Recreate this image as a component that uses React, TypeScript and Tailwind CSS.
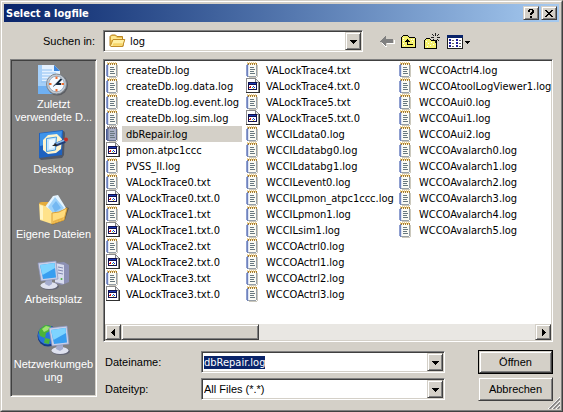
import { useEffect, useRef, type ReactNode } from 'react';

type FileKind = 'log' | 'app';

const COLUMNS: string[][] = [
  [
    'createDb.log', 'createDb.log.data.log', 'createDb.log.event.log', 'createDb.log.sim.log',
    'dbRepair.log', 'pmon.atpc1ccc', 'PVSS_II.log', 'VALockTrace0.txt', 'VALockTrace0.txt.0',
    'VALockTrace1.txt', 'VALockTrace1.txt.0', 'VALockTrace2.txt', 'VALockTrace2.txt.0',
    'VALockTrace3.txt', 'VALockTrace3.txt.0',
  ],
  [
    'VALockTrace4.txt', 'VALockTrace4.txt.0', 'VALockTrace5.txt', 'VALockTrace5.txt.0',
    'WCCILdata0.log', 'WCCILdatabg0.log', 'WCCILdatabg1.log', 'WCCILevent0.log',
    'WCCILpmon_atpc1ccc.log', 'WCCILpmon1.log', 'WCCILsim1.log', 'WCCOActrl0.log',
    'WCCOActrl1.log', 'WCCOActrl2.log', 'WCCOActrl3.log',
  ],
  [
    'WCCOActrl4.log', 'WCCOAtoolLogViewer1.log', 'WCCOAui0.log', 'WCCOAui1.log', 'WCCOAui2.log',
    'WCCOAvalarch0.log', 'WCCOAvalarch1.log', 'WCCOAvalarch2.log', 'WCCOAvalarch3.log',
    'WCCOAvalarch4.log', 'WCCOAvalarch5.log',
  ],
];

const SELECTED = 'dbRepair.log';

const RAISED =
  'bg-[#d4d0c8] border border-t-[#d4d0c8] border-l-[#d4d0c8] border-r-[#404040] border-b-[#404040] shadow-[inset_1px_1px_0_#fff,inset_-1px_-1px_0_#808080]';
// The padding keeps children off the inner line of the bevel
const SUNKEN =
  'p-px border border-t-[#808080] border-l-[#808080] border-r-white border-b-white shadow-[inset_1px_1px_0_#404040,inset_-1px_-1px_0_#d4d0c8]';

const fileKind = (name: string): FileKind => (/\.(log|txt)$/.test(name) ? 'log' : 'app');

function NotepadIcon({ selected }: { selected?: boolean }) {
  return (
    <svg className="shrink-0" width="16" height="16" viewBox="0 0 16 16" shapeRendering="crispEdges" aria-hidden="true">
      <path d="M12 3h1v12h-1zM4 15h8v1H4z" fill="#cbc8bc" />
      <path d="M3 2h9v12h-1v1H3z" fill={selected ? '#a9b0c6' : '#fbfbf4'} />
      <path d="M1 3h1v11H1z" fill={selected ? '#4c5c94' : '#8f9fd0'} />
      <path d="M2 2h1v13H2z" fill={selected ? '#6472a0' : '#7083bd'} />
      <path d="M3 3h1v11H3z" fill={selected ? '#8792b4' : '#dce4f6'} />
      <path d="M11 3h1v11h-1zM3 14h8v1H3z" fill={selected ? '#66708e' : '#98a0a8'} />
      <path d="M3 1h1v2H3zM5 1h1v2H5zM7 1h1v2H7zM9 1h1v2H9zM11 1h1v2h-1z" fill={selected ? '#776c6c' : '#a87c2c'} />
      <path d="M2 0h1v2H2zM4 0h1v2H4zM6 0h1v2H6zM8 0h1v2H8zM10 0h1v2h-1z" fill={selected ? '#9a9490' : '#ecd090'} />
      <path d="M5 5h4v1H5zM5 7h5v1H5zM5 9h4v1H5zM5 11h5v1H5z" fill="#687880" />
    </svg>
  );
}

function AppFileIcon() {
  return (
    <svg className="shrink-0" width="16" height="16" viewBox="0 0 16 16" shapeRendering="crispEdges" aria-hidden="true">
      <path d="M1 0h10v1h1v1h1v1h1v12H1z" fill="#8c8c8c" />
      <path d="M2 1h8v4h3v9H2z" fill="#fff" />
      <path d="M10 1h1v3h2v1h-3z" fill="#808080" />
      <path d="M11 2h1v1h1v1h-2z" fill="#e8e8e8" />
      <path d="M14 4h1v11h-1zM1 14h14v1H1z" fill="#303030" />
      <path d="M3 4h9v8H3z" fill="#10104c" />
      <path d="M4 5h7v1H4z" fill="#1c3cb4" />
      <path d="M4 7h7v4H4z" fill="#fff" />
      <path d="M5 8h1v2H5zM4 9h1v1H4z" fill="#d81c1c" />
      <path d="M8 8h1v1H8zM9 9h1v1H9z" fill="#1830d8" />
      <path d="M7 9h1v1H7z" fill="#20a0a0" />
      <path d="M8 10h1v1H8z" fill="#e0b020" />
    </svg>
  );
}

function FolderIcon() {
  return (
    <svg width="17" height="16" viewBox="0 0 17 16" aria-hidden="true">
      <path d="M1 3.500 2.500 2h4L8 3.500h5.500v3H15l-1 7H2L1 12.500z" fill="#ecc050" stroke="#b98420" />
      <path d="M2 3.500 3 3h3.200L8 5h5v2H2z" fill="#ffe890" />
      <path d="M1.500 12.500 4 6.500H15.800L13.500 13.500H2z" fill="#fff0a4" stroke="#c18d28" />
      <path d="M3.500 12.800h9.500l.8-2.500H4.400z" fill="#f6d468" />
    </svg>
  );
}

function RecentIcon() {
  return (
    <svg width="34" height="32" viewBox="0 0 34 32" aria-hidden="true">
      <path d="M1 1h16l6 6v23H1z" fill="#e4f1ff" />
      <path d="M1 1h4v29H1z" fill="#a6d0fa" />
      <path d="M1 20h22v10H1z" fill="#6fb0f2" />
      <path d="M1 17h12v5H1z" fill="#a4cff8" />
      <path d="M17 1v6h6z" fill="#3c86dc" />
      <path d="M5 6h10M5 9h14M5 12h8M5 15h6M4 18h5" stroke="#8fc0f2" />
      <circle cx="20.500" cy="21" r="10.500" fill="#40444c" opacity=".55" />
      <circle cx="19.500" cy="20" r="10" fill="#c4cad2" stroke="#808890" />
      <circle cx="19.500" cy="20" r="7.800" fill="#f6faff" stroke="#98aec4" />
      <path d="M19.500 12.500v2.500M19.500 25v2.500M12 20h2.500M24.500 20H27" stroke="#f07030" strokeWidth="2" />
      <path d="m24.500 15-5 5h4.500" stroke="#16283c" strokeWidth="1.800" fill="none" />
      <path d="m19.500 20-3.500 2.500" stroke="#50647a" />
    </svg>
  );
}

function DesktopIcon() {
  return (
    <svg width="34" height="32" viewBox="0 0 34 32" aria-hidden="true">
      <path d="M3 5 27 2l1 2-1 22-2 3-21 2-2-2z" fill="#303c54" opacity=".6" />
      <path d="M2 4 26 1l-1 25-23 3z" fill="#1e62c0" />
      <path d="M3 4.500 25 2l-1 10L3 17z" fill="#3e94ea" />
      <path d="m6 11 5-5 9-1 5 5-1 10-5 4-8 1-5-4z" fill="#fff4cc" />
      <path d="m9.500 9.500 10-1.500-1 13-9 1.500z" fill="#c8e8ff" stroke="#489cdf" />
      <path d="m12 11 6-1-1 9-5 1z" fill="#eef9ff" />
      <path d="m18 16 10-4" stroke="#203c78" strokeWidth="4" />
      <path d="m18 15 10-4" stroke="#88bcec" strokeWidth="1.500" />
      <path d="m15 17 4-3 1 3z" fill="#242424" />
      <circle cx="29" cy="10.500" r="2" fill="#c62c24" />
    </svg>
  );
}

function DocumentsIcon() {
  return (
    <svg width="34" height="32" viewBox="0 0 34 32" aria-hidden="true">
      <path d="m3 10 12 21 13-5 4-12-3-1z" fill="#50401c" opacity=".5" />
      <path d="M2 10q0-2 3-2h6l18 6-13 14z" fill="#e4ac3c" />
      <path d="M8 13 16 2l5-1 8 13-11 10-9-3z" fill="#e4f4ff" />
      <path d="m11 13 7-10 9 11-9 8z" fill="#9ed2fa" />
      <path d="m15 12 4-5 5 7-6 4z" fill="#74b8f2" />
      <path d="M2 10q7 1 13 8v12L3 26z" fill="#ffe28a" />
      <path d="m3 11 3 1v14l-3-1z" fill="#fff4c4" />
      <path d="m15 19 7-1 8-4-3 12-12 4z" fill="#ffdc7c" stroke="#dca238" />
      <path d="m16 27 11-4-.8 2.500L16 29z" fill="#eab448" />
    </svg>
  );
}

function Monitor({ x, y }: { x: number; y: number }) {
  return (
    <g transform={`translate(${x} ${y})`}>
      <ellipse cx="12" cy="26.500" rx="9" ry="3.500" fill="#50546c" opacity=".6" />
      <ellipse cx="11" cy="25.500" rx="8.500" ry="3.500" fill="#dfe2f0" />
      <path d="M8 18h6v6l-3 2-4-2z" fill="#a4acce" />
      <path d="M0 3 18 1l2 18-17 2z" fill="#c9cfe8" stroke="#8890b8" strokeWidth=".7" />
      <path d="m2 5 14.500-2L18 17.500 5 19z" fill="#389ef0" />
      <path d="m2 5 14.500-2L17 8 4.500 15z" fill="#7ed4ff" />
    </g>
  );
}

function ComputerIcon() {
  return (
    <svg width="34" height="32" viewBox="0 0 34 32" aria-hidden="true">
      <path d="m18 4 9-1 5 3v17l-7 3-7-2z" fill="#8c90b4" />
      <path d="m18 4 9 2v19l-9-2z" fill="#d8dcee" />
      <path d="m21 8 5 1M21 11l5 1M21 14l5 1" stroke="#8088b0" />
      <circle cx="24.500" cy="20" r="1" fill="#4cb044" />
      <Monitor x={1} y={1} />
    </svg>
  );
}

function NetworkIcon() {
  return (
    <svg width="34" height="32" viewBox="0 0 34 32" aria-hidden="true">
      <circle cx="11" cy="12" r="10.500" fill="#143c84" />
      <circle cx="10.500" cy="11" r="9.500" fill="#2a74da" />
      <path d="m3 5 5-4 6 1-1 5-4 2-1 5-5-2-1-4zM8 14l5 1-1 5-5-1z" fill="#4cb438" />
      <path d="m5 5 4-3 4 1-2 3-4 2z" fill="#a0e470" />
      <Monitor x={12} y={1} />
    </svg>
  );
}

const PLACES: { label: string; icon: ReactNode; space: string }[] = [
  { label: 'Zuletzt verwendete D...', icon: <RecentIcon />, space: 'pt-[3px]' },
  { label: 'Desktop', icon: <DesktopIcon />, space: 'pt-[5px]' },
  { label: 'Eigene Dateien', icon: <DocumentsIcon />, space: 'pt-[18px]' },
  { label: 'Arbeitsplatz', icon: <ComputerIcon />, space: 'pt-[18px]' },
  { label: 'Netzwerkumgebung', icon: <NetworkIcon />, space: 'pt-[18px]' },
];

function Arrow({ dir = 'down' }: { dir?: 'down' | 'left' | 'right' }) {
  const paths = {
    down: 'M0 2h7v1H6v1H5v1H4v1H3V5H2V4H1V3H0z',
    left: 'M5 0v7H4V6H3V5H2V4H1V3h1V2h1V1h1V0z',
    right: 'M2 0v7h1V6h1V5h1V4h1V3H5V2H4V1H3V0z',
  };
  return (
    <svg width="7" height="7" viewBox="0 0 7 7" shapeRendering="crispEdges" aria-hidden="true">
      <path d={paths[dir]} />
    </svg>
  );
}

function DropHandle() {
  return (
    <span className={`pointer-events-none absolute inset-y-px right-px flex w-4 items-center justify-center ${RAISED}`}>
      <Arrow />
    </span>
  );
}

function Toolbar() {
  return (
    <div className="ml-4 flex items-center gap-[6px]">
      <button aria-label="Zurück" className="h-5 w-4">
        <svg width="16" height="20" viewBox="0 0 16 20" shapeRendering="crispEdges">
          <path d="M3 12h1v1h1v1h1v1h2v-3h7V9h1v4H8v3H6v-1H5v-1H4v-1H3z" fill="#fff" />
          <path d="M1 10h1V9h1V8h1V7h1V6h1V5h1v3h7v4H7v3H6v-1H5v-1H4v-1H3v-1H1z" fill="#808080" />
        </svg>
      </button>
      <button aria-label="Übergeordneter Ordner" className="h-5 w-4">
        <svg width="16" height="20" viewBox="0 0 16 20" shapeRendering="crispEdges">
          <path d="M1 5h1V4h5v1h1v1h6v1h1v10H0V6h1z" fill="#000" />
          <path d="M2 5h5v1h1v1h6v9H1V6h1z" fill="#f4f06c" />
          <path d="M2 7h1v1H2zM10 8h1v1h-1zM12 8h1v1h-1zM2 9h1v1H2zM11 10h1v1h-1zM2 12h1v1H2zM8 10h1v1H8zM3 14h1v1H3z" fill="#fff" />
          <path d="M6 8h1v1h1v1h1v1H7v2h5v1H6v-3H4v-1h1V9h1z" fill="#000" />
        </svg>
      </button>
      <button aria-label="Neuer Ordner" className="h-5 w-[18px]">
        <svg width="18" height="20" viewBox="0 0 18 20" shapeRendering="crispEdges">
          <path d="M2 8h1V7h4v1h1v1h6v9H1V9h1z" fill="#000" />
          <path d="M3 8h4v1h1v1h5v7H2V9h1z" fill="#f4f06c" />
          <path d="M3 10h1v1H3zM5 12h1v1H5zM8 11h1v1H8zM10 13h1v1h-1zM4 15h1v1H4zM7 14h1v1H7z" fill="#fff" />
          <path d="M12 2h1v3h-1zM12 9h1v3h-1zM8 6h3v1H8zM14 6h3v1h-3zM9 3h1v1H9zM10 4h1v1h-1zM14 4h1v1h-1zM15 3h1v1h-1zM14 8h1v1h-1zM15 9h1v1h-1zM10 8h1v1h-1z" fill="#202020" />
        </svg>
      </button>
      <button aria-label="Ansicht" className="h-5 w-6">
        <svg width="24" height="20" viewBox="0 0 24 20" shapeRendering="crispEdges">
          <path d="M0 4h16v14H0z" fill="#202020" />
          <path d="M1 7h14v10H1z" fill="#fff" />
          <path d="M0 4h16v3H0z" fill="#0a246a" />
          <path d="M2 8h2v2H2zM9 8h2v2H9zM2 11h2v2H2zM9 11h2v2H9zM2 14h2v2H2zM9 14h2v2H9z" fill="#20209a" />
          <path d="M5 9h2v1H5zM12 9h2v1h-2zM5 12h2v1H5zM12 12h2v1h-2zM5 15h2v1H5zM12 15h2v1h-2z" fill="#606060" />
          <path d="M18 10h5v1h-1v1h-1v1h-1v-1h-1v-1h-1z" fill="#000" />
        </svg>
      </button>
    </div>
  );
}

export default function App() {
  const nameRef = useRef<HTMLInputElement>(null);

  useEffect(() => {
    nameRef.current?.focus();
    nameRef.current?.select();
  }, []);

  return (
    <div className="border border-t-[#d4d0c8] border-r-[#404040] border-b-[#404040] border-l-[#d4d0c8] bg-[#d4d0c8] font-['Liberation_Sans',Arial,sans-serif] text-[11px] leading-[13px] text-black">
      <div className="relative border border-t-white border-r-[#808080] border-b-[#808080] border-l-white p-[2px]">
        <header className="flex h-[18px] items-center gap-[2px] bg-linear-to-r from-[#0a246a] to-[#a6caf0] px-[2px]">
          <h1 className="flex-1 font-['DejaVu_Sans_Condensed','DejaVu_Sans',sans-serif] text-[11px] font-bold text-white">
            Select a logfile
          </h1>
          <button aria-label="Hilfe" className={`flex h-[14px] w-4 items-center justify-center ${RAISED}`}>
            <svg width="8" height="9" viewBox="0 0 8 9" shapeRendering="crispEdges">
              <path d="M2 0h4v1h1v3H6v1H5v1H3V4h1V3h1V1H3v2H1V1h1zM3 7h2v2H3z" />
            </svg>
          </button>
          <button aria-label="Schließen" className={`flex h-[14px] w-4 items-center justify-center ${RAISED}`}>
            <svg width="8" height="7" viewBox="0 0 8 7" shapeRendering="crispEdges">
              <path d="M0 0h2v1h1v1h2V1h1V0h2v1H7v1H6v1H5v1h1v1h1v1h1v1H6V6H5V5H3v1H2v1H0V6h1V5h1V4h1V3H2V2H1V1H0z" />
            </svg>
          </button>
        </header>

        <div className="px-[6px] pt-2 pb-[7px]">
          <div className="flex items-center">
            <label htmlFor="folder" className="w-[93px] pr-2 text-right">Suchen in:</label>
            <div className={`relative flex h-[22px] w-[260px] items-center bg-white ${SUNKEN}`}>
              <span className="pl-1"><FolderIcon /></span>
              <select id="folder" className="h-full min-w-0 flex-1 appearance-none pl-1 font-['DejaVu_Sans_Condensed',sans-serif] outline-none">
                <option>log</option>
              </select>
              <DropHandle />
            </div>
            <Toolbar />
          </div>

          <div className="mt-[7px] flex gap-[6px]">
            <nav className={`mb-1 flex w-[87px] shrink-0 flex-col bg-[#808080] ${SUNKEN}`}>
              {PLACES.map(place => (
                <button key={place.label} className={`flex w-full flex-col items-center text-white ${place.space}`}>
                  {place.icon}
                  <span className="mt-[2px] w-full text-center wrap-anywhere">{place.label}</span>
                </button>
              ))}
            </nav>

            <main className="min-w-0 flex-1">
              <section className={`bg-white ${SUNKEN}`}>
                <div className="grid h-[263px] grid-cols-[140px_153px_1fr] pt-px font-['DejaVu_Sans_Condensed','DejaVu_Sans',sans-serif]">
                  {COLUMNS.map(files => (
                    <ul key={files[0]}>
                      {files.map(name => (
                        <li key={name}>
                          <button className={`flex h-4 items-center gap-px text-left whitespace-nowrap ${name === SELECTED ? 'w-[137px]' : ''}`}>
                            {fileKind(name) === 'log' ? <NotepadIcon selected={name === SELECTED} /> : <AppFileIcon />}
                            <span className={`flex h-4 flex-1 items-center pl-1 ${name === SELECTED ? 'bg-[#d4d0c8]' : ''}`}>{name}</span>
                          </button>
                        </li>
                      ))}
                    </ul>
                  ))}
                </div>
                <div className="flex h-4 bg-[#e9e7e3]">
                  <button aria-label="Nach links" className={`flex w-4 items-center justify-center ${RAISED}`}>
                    <Arrow dir="left" />
                  </button>
                  <div className={`w-[31%] ${RAISED}`} />
                  <button aria-label="Nach rechts" className={`ml-auto flex w-4 items-center justify-center ${RAISED}`}>
                    <Arrow dir="right" />
                  </button>
                </div>
              </section>

              <form className="mt-2 grid grid-cols-[96px_1fr_75px] items-center gap-y-[3px] pl-[2px]" onSubmit={e => e.preventDefault()}>
                <label htmlFor="filename">Dateiname:</label>
                <div className={`mr-[33px] flex h-[22px] bg-white ${SUNKEN}`}>
                  <input
                    ref={nameRef}
                    id="filename"
                    defaultValue={SELECTED}
                    className="min-w-0 flex-1 pl-px font-['DejaVu_Sans_Condensed',sans-serif] outline-none selection:bg-[#0a246a] selection:text-white"
                  />
                  <button type="button" aria-label="Dateinamen anzeigen" className={`flex w-4 items-center justify-center ${RAISED}`}>
                    <Arrow />
                  </button>
                </div>
                <button className="h-6 border border-black">
                  <span className={`flex h-full items-center justify-center ${RAISED}`}>Öffnen</span>
                </button>
                <label htmlFor="filetype">Dateityp:</label>
                <div className={`relative mr-[33px] flex h-[22px] bg-white ${SUNKEN}`}>
                  <select id="filetype" className="min-w-0 flex-1 appearance-none pl-px outline-none">
                    <option>All Files (*.*)</option>
                  </select>
                  <DropHandle />
                </div>
                <button type="button" className={`h-6 ${RAISED}`}>Abbrechen</button>
              </form>
            </main>
          </div>
        </div>
        <svg className="absolute right-px bottom-px" width="12" height="12" viewBox="0 0 12 12" aria-hidden="true">
          <path d="M0 12 12 0M4 12l8-8M8 12l4-4" stroke="#fff" />
          <path d="M1.500 12 12 1.500M5.500 12 12 5.500M9.500 12 12 9.500" stroke="#808080" strokeWidth="1.500" />
        </svg>
      </div>
    </div>
  );
}
